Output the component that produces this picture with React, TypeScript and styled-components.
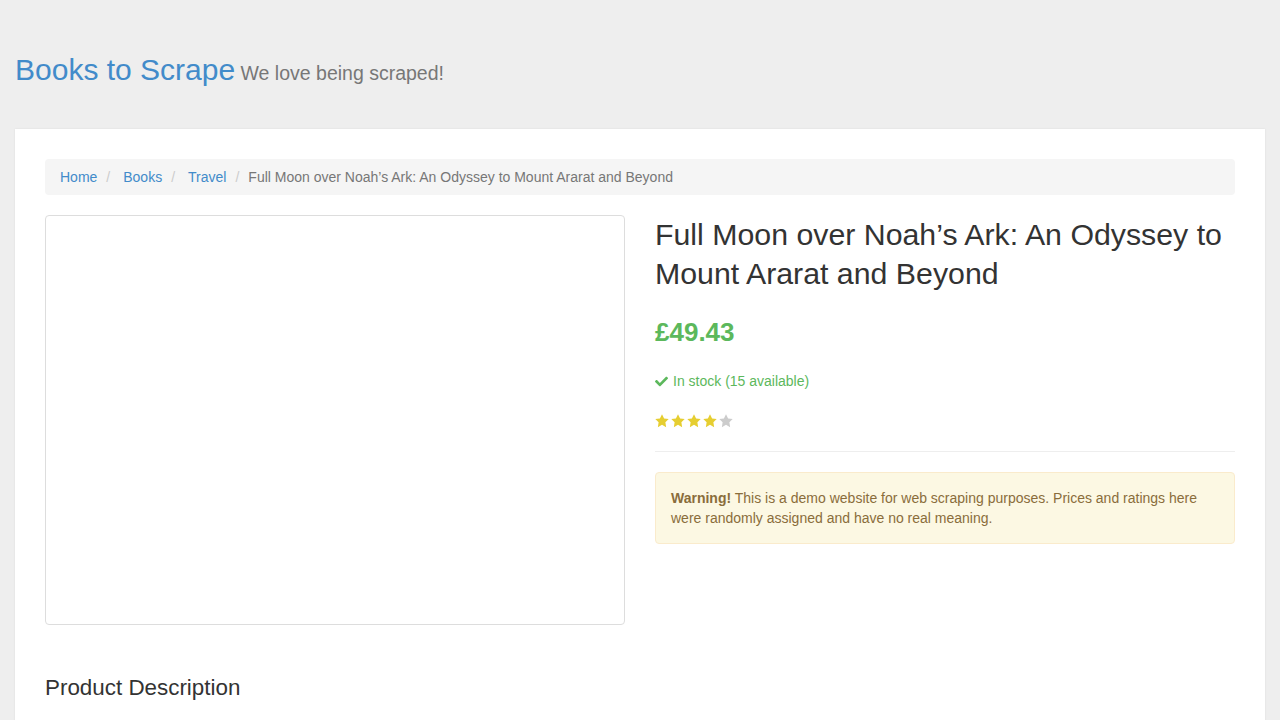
import React from "react";
import styled, { createGlobalStyle } from "styled-components";
import { FaCheck } from "react-icons/fa";

const GlobalStyle = createGlobalStyle`
  html, body { margin: 0; padding: 0; }
  body {
    background: #eeeeee;
    font-family: "Liberation Sans", Arial, Helvetica, sans-serif;
    font-size: 14px;
    line-height: 1.428571;
    color: #333;
  }
  * { box-sizing: border-box; }
`;

const Header = styled.header`
  padding: 53px 15px 0;
  height: 129px;
`;

const Brand = styled.h1`
  margin: 0;
  font-size: 30px;
  line-height: 33px;
  font-weight: normal;
`;

const BrandLink = styled.a`
  color: #428bca;
  text-decoration: none;
`;

const Tagline = styled.small`
  font-size: 19.5px;
  color: #777;
`;

const PageInner = styled.div`
  margin: 0 15px;
  background: #fff;
  padding: 30px;
  box-shadow: 0 0 2px rgba(0, 0, 0, 0.08);
  min-height: 600px;
`;

const Breadcrumb = styled.ol`
  display: flex;
  list-style: none;
  margin: 0 0 20px;
  padding: 8px 15px;
  background: #f5f5f5;
  border-radius: 4px;
  line-height: 20px;
`;

const Crumb = styled.li<{ $active?: boolean }>`
  color: ${(p) => (p.$active ? "#777" : "#428bca")};
  &:not(:first-child)::before {
    content: "/";
    color: #ccc;
    padding: 0 9px;
  }
`;

const CrumbLink = styled.a<{ $first?: boolean }>`
  color: #428bca;
  text-decoration: none;
  margin-left: ${(p) => (p.$first ? "0" : "4px")};
`;

const ProductRow = styled.div`
  display: grid;
  grid-template-columns: 580px 580px;
  column-gap: 30px;
`;

const ImageBox = styled.div`
  height: 410px;
  border: 1px solid #ddd;
  border-radius: 4px;
  background: #fff;
`;

const ProductMain = styled.div`
  display: flex;
  flex-direction: column;
`;

const Title = styled.h1`
  margin: 0;
  font-size: 30.3px;
  line-height: 39px;
  font-weight: normal;
  color: #333;
`;

const Price = styled.p`
  margin: 24px 0 0;
  font-size: 26px;
  line-height: 30px;
  font-weight: bold;
  color: #5cb85c;
`;

const Stock = styled.p`
  margin: 24px 0 0;
  display: flex;
  align-items: center;
  gap: 5px;
  color: #5cb85c;
  line-height: 20px;
`;

const Stars = styled.div`
  margin-top: 20px;
  height: 20px;
  display: flex;
  align-items: center;
  gap: 2px;
`;

const Rule = styled.hr`
  margin: 20px 0;
  border: 0;
  border-top: 1px solid #eee;
`;

const Alert = styled.div`
  padding: 15px;
  background: #fcf8e3;
  border: 1px solid #faebcc;
  border-radius: 4px;
  color: #8a6d3b;
  line-height: 20px;
`;

const SubHeader = styled.h2`
  margin: 51px 0 0;
  font-size: 22.4px;
  line-height: 24px;
  font-weight: normal;
  color: #333;
`;

const Star = ({ on }: { on: boolean }) => (
  <svg width="14" height="14" viewBox="0 0 24 24">
    <polygon
      points="12,0.5 15.6,7.6 23.5,8.7 17.8,14.2 19.1,22.5 12,18.6 4.9,22.5 6.2,14.2 0.5,8.7 8.4,7.6"
      fill={on ? "#E6CE31" : "#cccccc"}
    />
  </svg>
);

export default function App() {
  return (
    <>
      <GlobalStyle />
      <Header>
        <Brand>
          <BrandLink href="#">Books to Scrape</BrandLink>
          <Tagline> We love being scraped!</Tagline>
        </Brand>
      </Header>
      <PageInner>
        <Breadcrumb>
          <Crumb><CrumbLink href="#" $first>Home</CrumbLink></Crumb>
          <Crumb><CrumbLink href="#">Books</CrumbLink></Crumb>
          <Crumb><CrumbLink href="#">Travel</CrumbLink></Crumb>
          <Crumb $active>Full Moon over Noah’s Ark: An Odyssey to Mount Ararat and Beyond</Crumb>
        </Breadcrumb>
        <ProductRow>
          <ImageBox />
          <ProductMain>
            <Title>Full Moon over Noah’s Ark: An Odyssey to Mount Ararat and Beyond</Title>
            <Price>£49.43</Price>
            <Stock>
              <FaCheck size={13} />
              In stock (15 available)
            </Stock>
            <Stars>
              {[1, 2, 3, 4, 5].map((i) => (
                <Star key={i} on={i <= 4} />
              ))}
            </Stars>
            <Rule />
            <Alert>
              <strong>Warning!</strong> This is a demo website for web scraping purposes. Prices and
              ratings here were randomly assigned and have no real meaning.
            </Alert>
          </ProductMain>
        </ProductRow>
        <SubHeader>Product Description</SubHeader>
      </PageInner>
    </>
  );
}
